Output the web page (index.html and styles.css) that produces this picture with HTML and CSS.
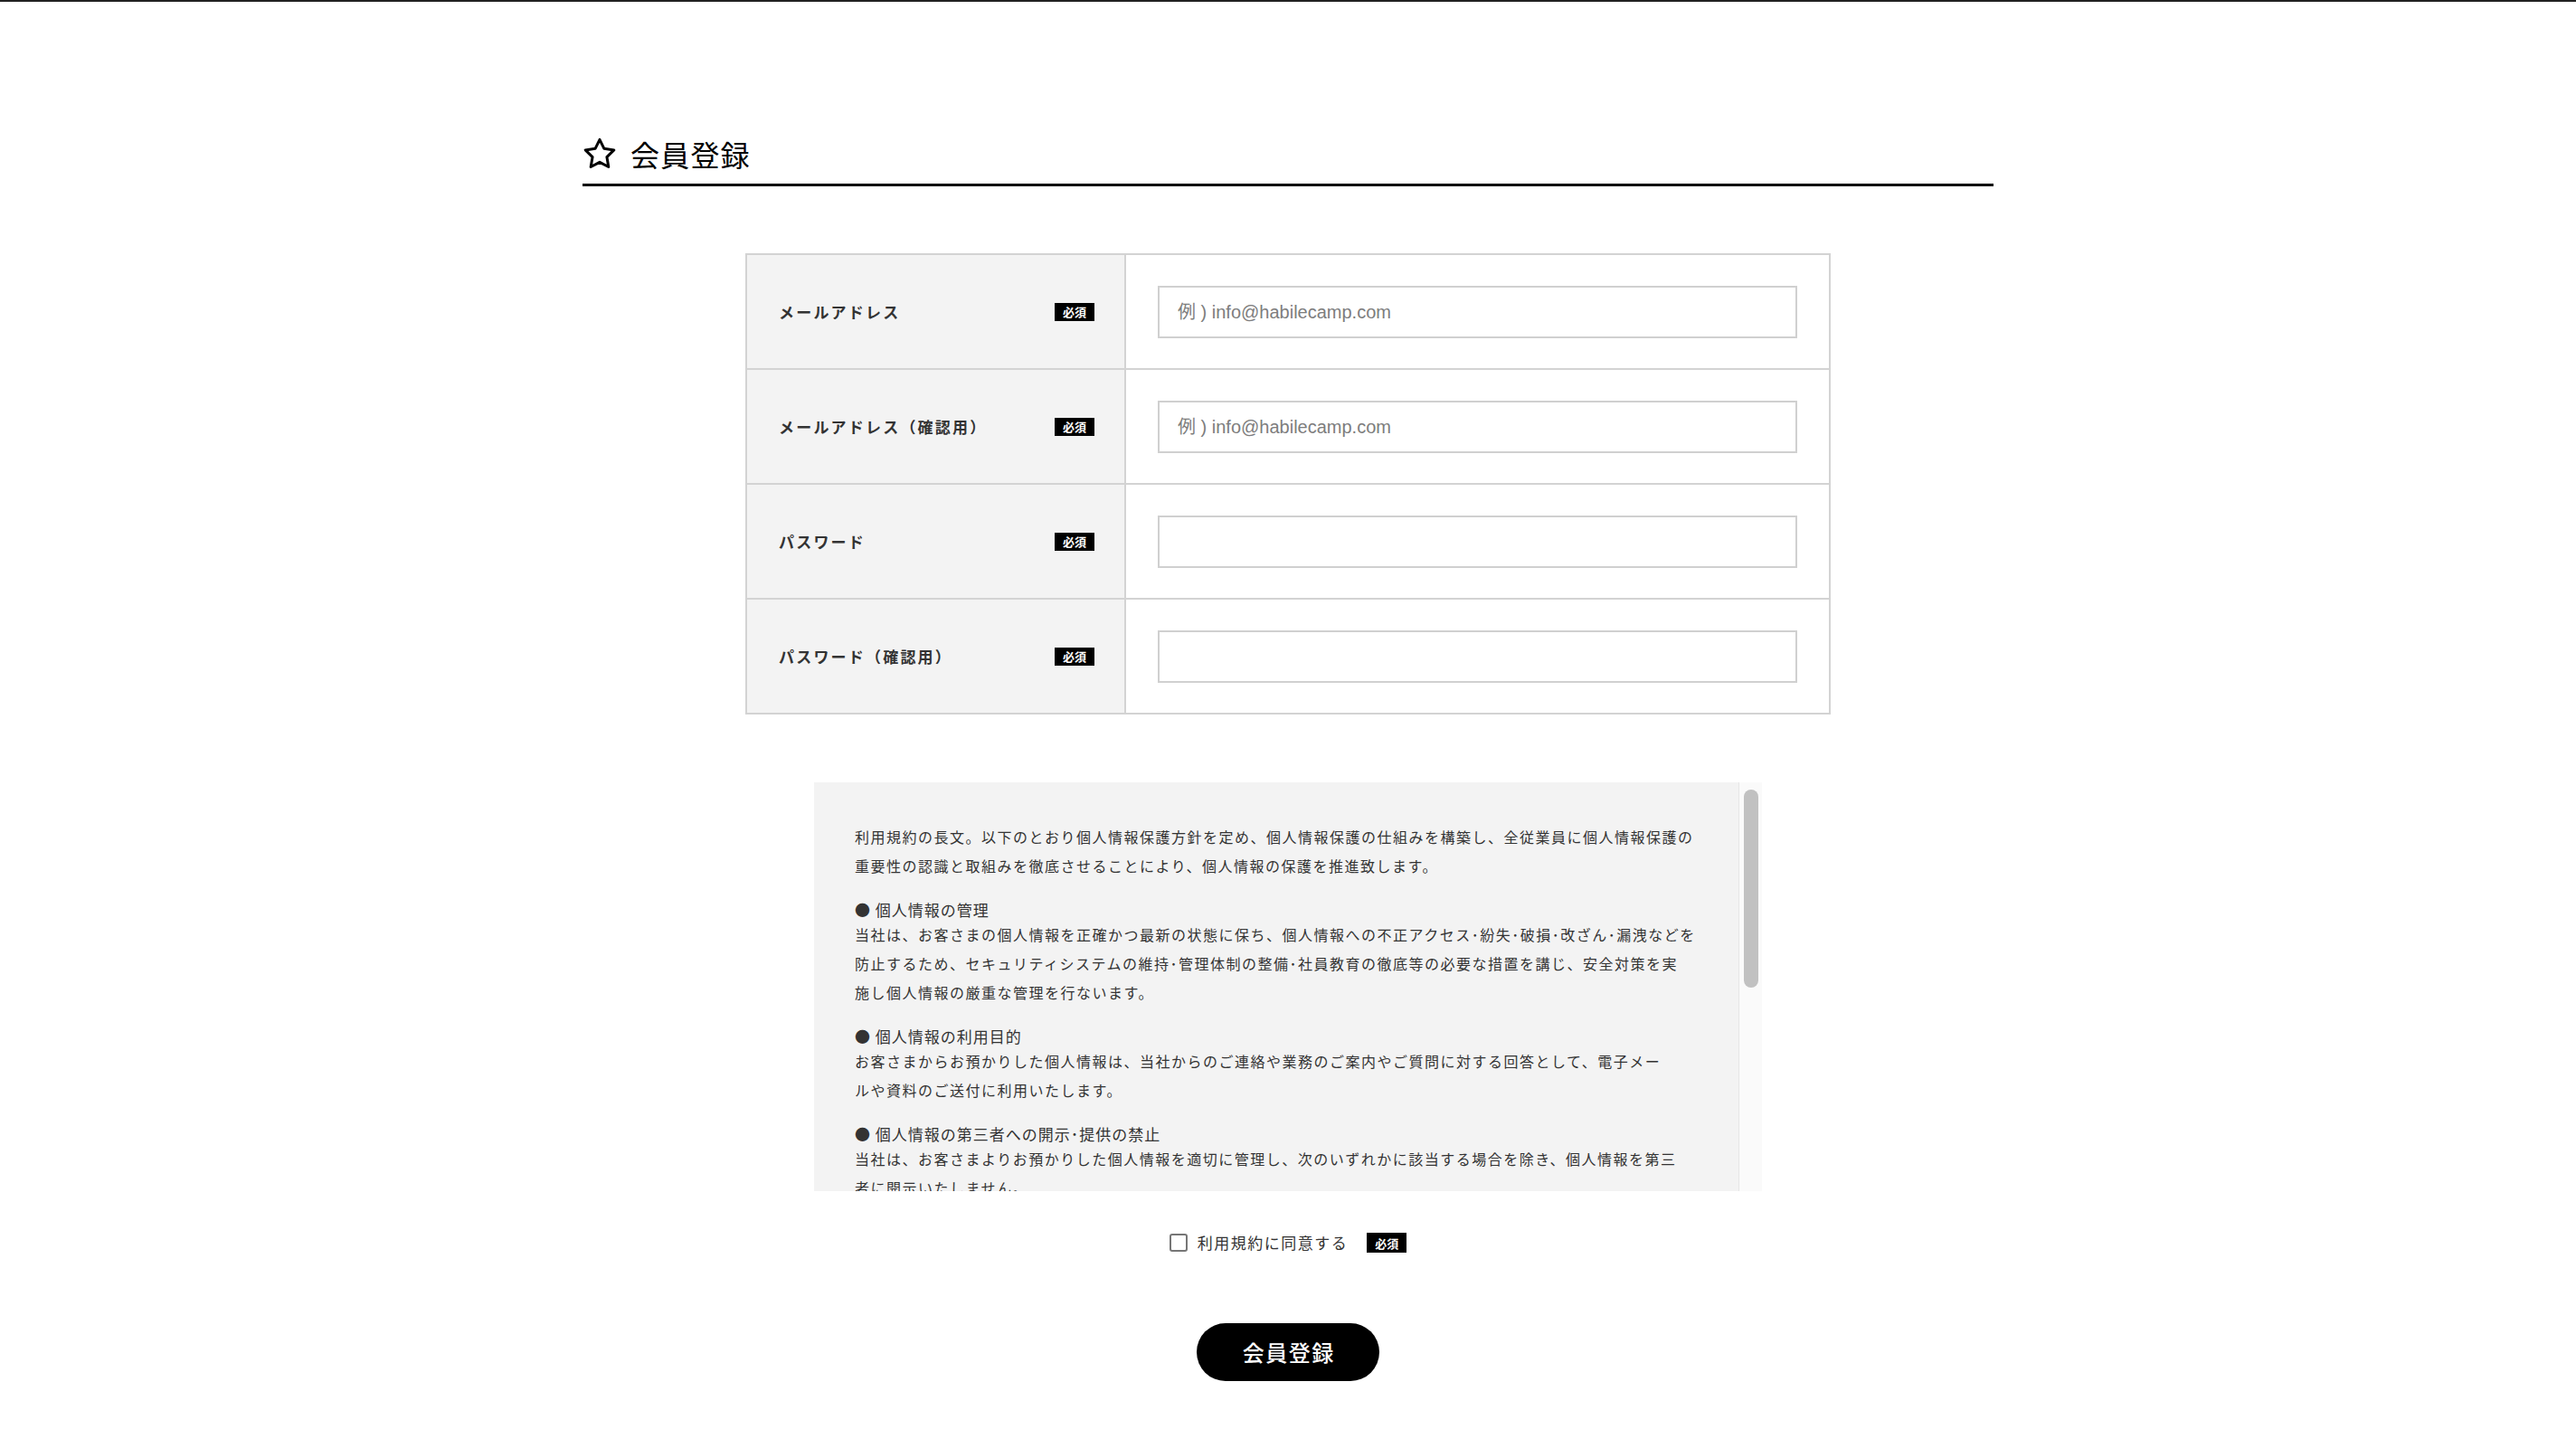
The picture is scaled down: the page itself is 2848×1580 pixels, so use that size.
FILE: index.html
```html
<!DOCTYPE html>
<html lang="ja">
<head>
<meta charset="utf-8">
<title>会員登録</title>
<link rel="stylesheet" href="styles.css">
</head>
<body>
<main class="page">
  <h1 class="page-title">
    <svg class="star" viewBox="0 0 24 24" width="40" height="40" aria-hidden="true">
      <polygon points="12,2.6 14.95,8.6 21.5,9.55 16.75,14.15 17.88,20.7 12,17.6 6.12,20.7 7.25,14.15 2.5,9.55 9.05,8.6" fill="none" stroke="#000" stroke-width="1.8" stroke-linejoin="round"/>
    </svg>
    <span>会員登録</span>
  </h1>

  <table class="form-table">
    <tr>
      <th><div class="label"><span>メールアドレス</span><span class="req">必須</span></div></th>
      <td><input class="field" type="email" placeholder="例 ) info@habilecamp.com"></td>
    </tr>
    <tr>
      <th><div class="label"><span>メールアドレス（確認用）</span><span class="req">必須</span></div></th>
      <td><input class="field" type="email" placeholder="例 ) info@habilecamp.com"></td>
    </tr>
    <tr>
      <th><div class="label"><span>パスワード</span><span class="req">必須</span></div></th>
      <td><input class="field" type="password"></td>
    </tr>
    <tr>
      <th><div class="label"><span>パスワード（確認用）</span><span class="req">必須</span></div></th>
      <td><input class="field" type="password"></td>
    </tr>
  </table>

  <div class="terms">
    <div class="terms-scroll">
      <p class="body">利用規約の長文。以下のとおり個人情報保護方針を定め、個人情報保護の仕組みを構築し、全従業員に個人情報保護の<br>重要性の認識と取組みを徹底させることにより、個人情報の保護を推進致します。</p>

      <p class="head">● 個人情報の管理</p>
      <p class="body">当社は、お客さまの個人情報を正確かつ最新の状態に保ち、個人情報への不正アクセス･紛失･破損･改ざん･漏洩などを<br>防止するため、セキュリティシステムの維持･管理体制の整備･社員教育の徹底等の必要な措置を講じ、安全対策を実<br>施し個人情報の厳重な管理を行ないます。</p>

      <p class="head">● 個人情報の利用目的</p>
      <p class="body">お客さまからお預かりした個人情報は、当社からのご連絡や業務のご案内やご質問に対する回答として、電子メー<br>ルや資料のご送付に利用いたします。</p>

      <p class="head">● 個人情報の第三者への開示･提供の禁止</p>
      <p class="body">当社は、お客さまよりお預かりした個人情報を適切に管理し、次のいずれかに該当する場合を除き、個人情報を第三<br>者に開示いたしません。<br>・お客さまの同意がある場合<br>・お客さまが希望されるサービスを行なうために当社が業務を委託する業者に対して開示する場合<br>・法令に基づき開示することが必要である場合</p>

      <p class="head">● 個人情報の安全対策</p>
      <p class="body">当社は、個人情報の正確性及び安全性確保のために、セキュリティに万全の対策を講じています。</p>

      <p class="head">● ご本人の照会</p>
      <p class="body">お客さまがご本人の個人情報の照会･修正･削除などをご希望される場合には、ご本人であることを確認の上、対応させていただきます。</p>

      <p class="head">● 法令、規範の遵守と見直し</p>
      <p class="body">当社は、保有する個人情報に関して適用される日本の法令、その他規範を遵守するとともに、本ポリシーの内容を適宜見直し、その改善に努めます。</p>
    </div>
    <div class="scrollbar" aria-hidden="true"><div class="thumb"></div></div>
  </div>

  <div class="agree">
    <input class="check" type="checkbox" id="agree">
    <label class="agree-text" for="agree">利用規約に同意する</label>
    <span class="req">必須</span>
  </div>

  <div class="actions">
    <button class="submit" type="button">会員登録</button>
  </div>
</main>
</body>
</html>
```

FILE: styles.css
```css
* {
  box-sizing: border-box;
}

html, body {
  margin: 0;
  padding: 0;
}

body {
  border-top: 2px solid #222;
  background: #fff;
  color: #333;
  font-family: "Noto Sans CJK JP", "Noto Sans", sans-serif;
}

.page {
  width: 1560px;
  margin: 0 auto;
  padding-bottom: 40px;
}

.page-title {
  display: flex;
  align-items: center;
  gap: 14px;
  margin: 144px 0 0;
  padding-bottom: 9px;
  border-bottom: 3px solid #000;
  font-size: 32px;
  font-weight: 400;
  line-height: 48px;
  letter-spacing: 1.2px;
  color: #000;
}

.star {
  display: block;
  margin-left: -1px;
}

/* form table */
.form-table {
  width: 1200px;
  margin: 74px auto 0;
  border-collapse: collapse;
}

.form-table th,
.form-table td {
  border: 2px solid #d3d3d3;
  padding: 0;
}

.form-table th {
  width: 419px;
  background: #f3f3f3;
  text-align: left;
  font-weight: 700;
  padding: 0 33px 0 35px;
}

.form-table td {
  padding: 34px 35px 33px;
  background: #fff;
}

.label {
  display: flex;
  align-items: center;
  justify-content: space-between;
  font-size: 17px;
  letter-spacing: 2.2px;
  color: #333;
  line-height: 24px;
}

.req {
  display: inline-flex;
  align-items: center;
  justify-content: center;
  width: 44px;
  height: 20px;
  background: #000;
  color: #fff;
  font-size: 13px;
  font-weight: 700;
  letter-spacing: 0;
  line-height: 1;
}

.field {
  display: block;
  width: 100%;
  height: 58px;
  border: 2px solid #d0d0d0;
  border-radius: 0;
  background: #fff;
  padding: 0 20px;
  font-family: "Liberation Sans", "Noto Sans CJK JP", sans-serif;
  font-size: 20px;
  color: #333;
  outline: none;
}

.field::placeholder {
  color: #7d7d7d;
}

/* terms */
.terms {
  display: flex;
  width: 1048px;
  height: 452px;
  margin: 75px auto 0;
  background: #f3f3f3;
  color: #333;
}

.terms-scroll {
  flex: 1;
  min-width: 0;
  height: 100%;
  overflow: hidden;
  padding: 44px 36px 44px 45px;
}

.scrollbar {
  flex: 0 0 26px;
  height: 100%;
  background: #fafafa;
  border-left: 1px solid #e6e6e6;
  padding: 8px 4px 0 5px;
}

.thumb {
  width: 16px;
  height: 219px;
  border-radius: 8px;
  background: #c1c1c1;
}

.terms p {
  margin: 0;
}

.terms .body {
  font-size: 16px;
  line-height: 32px;
  letter-spacing: 1.5px;
}

.terms .body + .head {
  margin-top: 22px;
}

.terms .head {
  font-size: 17px;
  line-height: 22px;
  letter-spacing: 1px;
}

/* agree */
.agree {
  display: flex;
  align-items: center;
  justify-content: center;
  margin-top: 45px;
  height: 24px;
}

.check {
  appearance: none;
  -webkit-appearance: none;
  width: 20px;
  height: 20px;
  margin: 0 11px 0 0;
  border: 2px solid #767676;
  border-radius: 3px;
  background: #fff;
  flex: none;
}

.agree-text {
  font-size: 17px;
  letter-spacing: 1.5px;
  line-height: 24px;
  color: #333;
  margin-right: 21px;
  cursor: pointer;
}

.agree .req {
  height: 22px;
}

/* button */
.actions {
  display: flex;
  justify-content: center;
  margin-top: 77px;
}

.submit {
  display: flex;
  align-items: center;
  justify-content: center;
  width: 202px;
  height: 64px;
  border: none;
  border-radius: 32px;
  background: #000;
  color: #fff;
  font-family: "Noto Sans CJK JP", sans-serif;
  font-size: 24px;
  font-weight: 500;
  line-height: 32px;
  letter-spacing: 1.5px;
  padding: 0 0 0 1.5px;
  cursor: pointer;
}
```
